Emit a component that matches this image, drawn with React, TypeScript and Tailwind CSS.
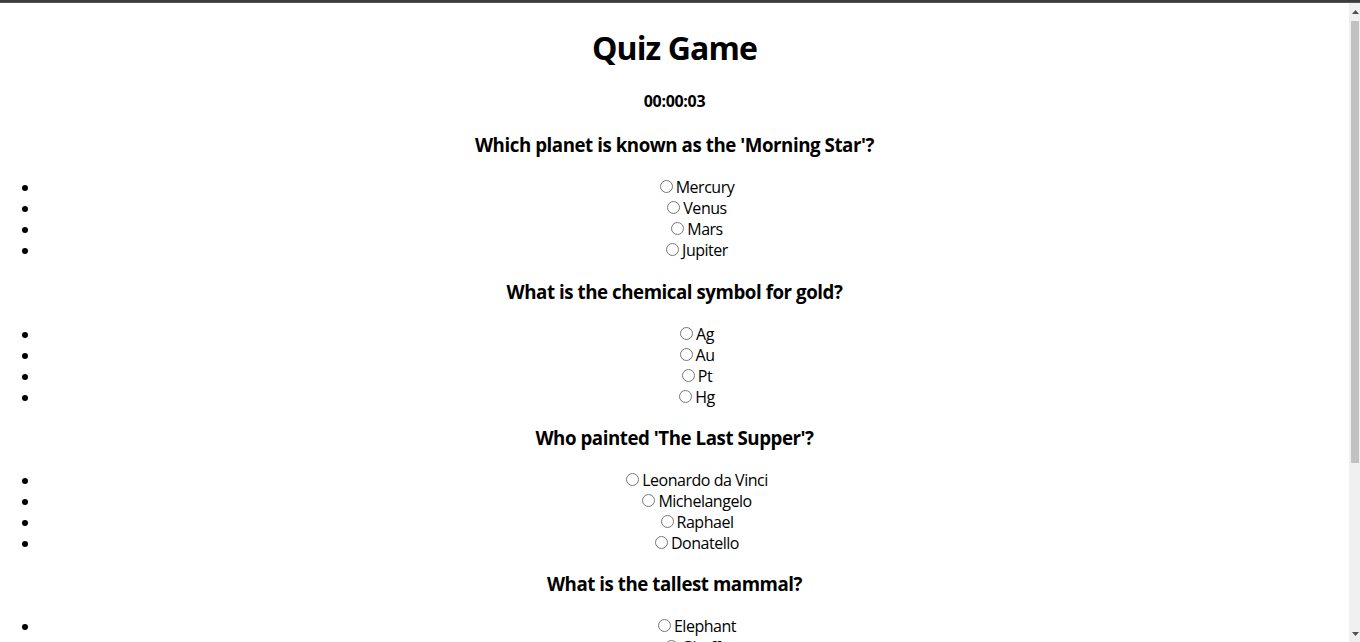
import React from "react";

const questions = [
  {
    q: "Which planet is known as the 'Morning Star'?",
    options: ["Mercury", "Venus", "Mars", "Jupiter"],
  },
  {
    q: "What is the chemical symbol for gold?",
    options: ["Ag", "Au", "Pt", "Hg"],
  },
  {
    q: "Who painted 'The Last Supper'?",
    options: ["Leonardo da Vinci", "Michelangelo", "Raphael", "Donatello"],
  },
  {
    q: "What is the tallest mammal?",
    options: ["Elephant", "Giraffe", "Blue Whale", "Hippopotamus"],
  },
];

export default function App() {
  return (
    <div
      className="h-[642px] flex flex-col overflow-hidden bg-white text-black"
      style={{ fontFamily: '"Open Sans", "Noto Sans", sans-serif' }}
    >
      <div className="h-[3px] shrink-0 bg-[#3c3c3c] border-b border-[#555]" />
      <div className="flex flex-1 min-h-0">
        <main className="flex-1 min-w-0 overflow-hidden text-center">
          <h1 className="text-[32px] leading-[43px] font-bold mt-[23px] tracking-[-0.028em]">
            Quiz Game
          </h1>
          <div className="text-[16px] leading-[21px] font-bold mt-[22px] pb-[3px] tracking-[-0.02em]">
            00:00:03
          </div>
          {questions.map((item, qi) => (
            <section key={qi} className={qi === 0 ? "pb-[1px]" : ""}>
              <h3 className="text-[18.72px] leading-[24px] font-bold mt-[18px] mb-[20px] tracking-[-0.024em]">
                {item.q}
              </h3>
              <ul className="list-disc pl-10">
                {item.options.map((opt) => (
                  <li key={opt} className="text-[16px] leading-[21px]">
                    <label className="tracking-[-0.03em]">
                      <input
                        type="radio"
                        name={`q${qi}`}
                        className="ml-[5px] mr-[3px] mt-[3px] w-[13px] h-[13px] align-baseline"
                      />
                      {opt}
                    </label>
                  </li>
                ))}
              </ul>
            </section>
          ))}
        </main>
        <div className="w-[11px] shrink-0 bg-[#f0f0f0] flex flex-col">
          <div className="h-[18px] flex items-center justify-end pr-[1px]">
            <svg width="7" height="4" viewBox="0 0 7 4">
              <path d="M0 4 L3.5 0 L7 4 Z" fill="#505050" />
            </svg>
          </div>
          <div className="h-[442px] ml-[2px] mr-[1px] bg-[#c1c1c1]" />
          <div className="flex-1" />
          <div className="h-[16px] flex items-center justify-end pr-[1px]">
            <svg width="7" height="4" viewBox="0 0 7 4">
              <path d="M0 0 L7 0 L3.5 4 Z" fill="#505050" />
            </svg>
          </div>
        </div>
      </div>
    </div>
  );
}
